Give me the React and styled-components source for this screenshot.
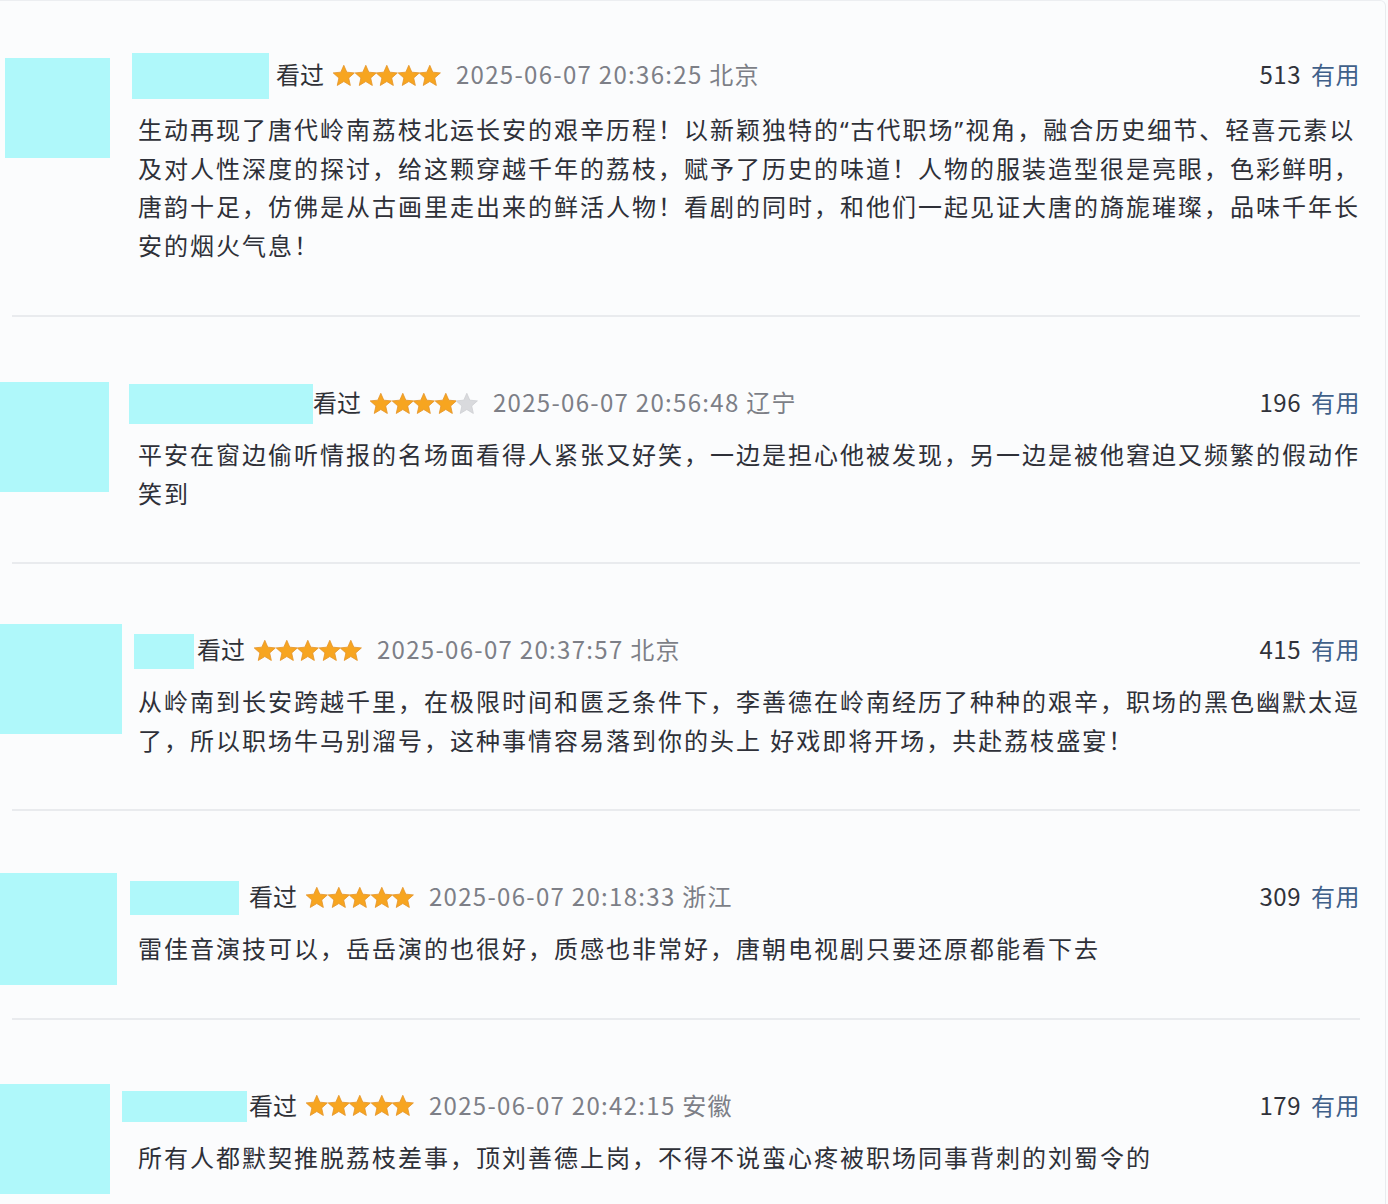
import styled, { createGlobalStyle } from 'styled-components'

const GlobalStyle = createGlobalStyle`
    html, body {
        margin: 0;
        padding: 0;
        background: #fbfcfd;
    }
    body {
        font-family: "Noto Sans CJK SC", "Noto Sans", sans-serif;
        overflow: hidden;
    }
`

const reviews = [
    {
        id: 1,
        avatar: { w: 105, h: 100, x: 5, y: 4 },
        name: { w: 137, h: 46, x: -6, gap: 7 },
        stars: 5,
        time: '2025-06-07 20:36:25',
        place: '北京',
        useful: 513,
        text: '生动再现了唐代岭南荔枝北运长安的艰辛历程！以新颖独特的“古代职场”视角，融合历史细节、轻喜元素以及对人性深度的探讨，给这颗穿越千年的荔枝，赋予了历史的味道！人物的服装造型很是亮眼，色彩鲜明，唐韵十足，仿佛是从古画里走出来的鲜活人物！看剧的同时，和他们一起见证大唐的旖旎璀璨，品味千年长安的烟火气息！',
    },
    {
        id: 2,
        avatar: { w: 109, h: 110, x: 0, y: 0 },
        name: { w: 184, h: 40, x: -9, gap: 0 },
        stars: 4,
        time: '2025-06-07 20:56:48',
        place: '辽宁',
        useful: 196,
        text: '平安在窗边偷听情报的名场面看得人紧张又好笑，一边是担心他被发现，另一边是被他窘迫又频繁的假动作笑到',
    },
    {
        id: 3,
        avatar: { w: 122, h: 110, x: 0, y: -5 },
        name: { w: 60, h: 35, x: -4, gap: 3 },
        stars: 5,
        time: '2025-06-07 20:37:57',
        place: '北京',
        useful: 415,
        text: '从岭南到长安跨越千里，在极限时间和匮乏条件下，李善德在岭南经历了种种的艰辛，职场的黑色幽默太逗了，所以职场牛马别溜号，这种事情容易落到你的头上 好戏即将开场，共赴荔枝盛宴！',
    },
    {
        id: 4,
        avatar: { w: 117, h: 112, x: 0, y: -3 },
        name: { w: 109, h: 34, x: -8, gap: 10 },
        stars: 5,
        time: '2025-06-07 20:18:33',
        place: '浙江',
        useful: 309,
        text: '雷佳音演技可以，岳岳演的也很好，质感也非常好，唐朝电视剧只要还原都能看下去',
    },
    {
        id: 5,
        avatar: { w: 110, h: 110, x: 0, y: -1 },
        name: { w: 125, h: 31, x: -16, gap: 2 },
        stars: 5,
        time: '2025-06-07 20:42:15',
        place: '安徽',
        useful: 179,
        text: '所有人都默契推脱荔枝差事，顶刘善德上岗，不得不说蛮心疼被职场同事背刺的刘蜀令的',
    },
]

const Page = styled.div`
    width: 1386px;
    box-sizing: border-box;
    border-top: 1px solid #eceef1;
    border-right: 1px solid #e9ebee;
    border-top-right-radius: 6px;
    min-height: 1204px;
`

const Item = styled.div`
    padding: ${({ $first }) => ($first ? '53px' : '65px')} 25px ${({ $first }) => ($first ? '50px' : '49px')} 0;
`

const Row = styled.div`
    display: flex;
    align-items: flex-start;
`

// the avatar hangs over the row and does not push the divider down
const AvatarSlot = styled.div`
    width: 138px;
    height: 0;
    flex-shrink: 0;
`

// redaction block covering the avatar
const Avatar = styled.div`
    width: ${({ $w }) => $w}px;
    height: ${({ $h }) => $h}px;
    margin-left: ${({ $x }) => $x}px;
    margin-top: ${({ $y }) => $y}px;
    background: #aff8fa;
`

const Main = styled.div`
    flex: 1;
    min-width: 0;
`

const Header = styled.div`
    display: flex;
    align-items: center;
    height: 44px;
`

// redaction block covering the user name
const Name = styled.div`
    width: ${({ $w }) => $w}px;
    height: ${({ $h }) => $h}px;
    margin-left: ${({ $x }) => $x}px;
    margin-right: ${({ $gap }) => $gap}px;
    background: #aff8fa;
    flex-shrink: 0;
`

const HeadText = styled.span`
    font-size: 24px;
    line-height: 1;
    padding-bottom: 4px;
`

const Watched = styled(HeadText)`
    color: #2f3137;
    margin-right: 9px;
`

const Stars = styled.span`
    display: inline-flex;
    margin-right: 15px;
    padding-bottom: 2px;
`

const Meta = styled(HeadText)`
    letter-spacing: 1.3px;
    color: #7d7f87;
`

const Useful = styled(HeadText)`
    margin-left: auto;
    letter-spacing: 0.5px;
    color: #30323a;

    b {
        font-weight: 400;
        color: #40608a;
        margin-left: 10px;
    }
`

// Latin face first so the curly quotes stay narrow; CJK falls through
const Content = styled.p`
    margin: ${({ $first }) => ($first ? '13px' : '10px')} 0 0;
    font-family: "Noto Sans", "Noto Sans CJK SC", sans-serif;
    font-size: 24px;
    line-height: 38.5px;
    letter-spacing: 2px;
    color: #2e3038;
    width: 1224px;
`

const Divider = styled.div`
    height: 2px;
    margin: 0 25px 0 12px;
    background: #e9ebee;
`

function Star({ on }) {
    return (
        <svg width="21.6" height="21" viewBox="1.6 1.6 20.8 20">
            <polygon
                points="12,1.8 14.9,8.4 22.2,9.1 16.7,14 18.3,21.2 12,17.4 5.7,21.2 7.3,14 1.8,9.1 9.1,8.4"
                fill={on ? '#f7a520' : '#d9dadd'}
                stroke={on ? '#e4952a' : '#cfd0d3'}
                strokeWidth="0.8"
                strokeLinejoin="round"
            />
        </svg>
    )
}

function Review({ review, first }) {
    const { avatar, name } = review
    return (
        <Item $first={first}>
            <Row>
                <AvatarSlot>
                    <Avatar $w={avatar.w} $h={avatar.h} $x={avatar.x} $y={avatar.y} />
                </AvatarSlot>
                <Main>
                    <Header>
                        <Name $w={name.w} $h={name.h} $x={name.x} $gap={name.gap} />
                        <Watched>看过</Watched>
                        <Stars>
                            {[0, 1, 2, 3, 4].map(i => <Star key={i} on={i < review.stars} />)}
                        </Stars>
                        <Meta>{review.time} {review.place}</Meta>
                        <Useful>{review.useful}<b>有用</b></Useful>
                    </Header>
                    <Content $first={first}>{review.text}</Content>
                </Main>
            </Row>
        </Item>
    )
}

function App() {
    return (
        <>
            <GlobalStyle />
            <Page>
                {reviews.map((r, i) => (
                    <div key={r.id}>
                        <Review review={r} first={i === 0} />
                        {i < reviews.length - 1 && <Divider />}
                    </div>
                ))}
            </Page>
        </>
    )
}

export default App
